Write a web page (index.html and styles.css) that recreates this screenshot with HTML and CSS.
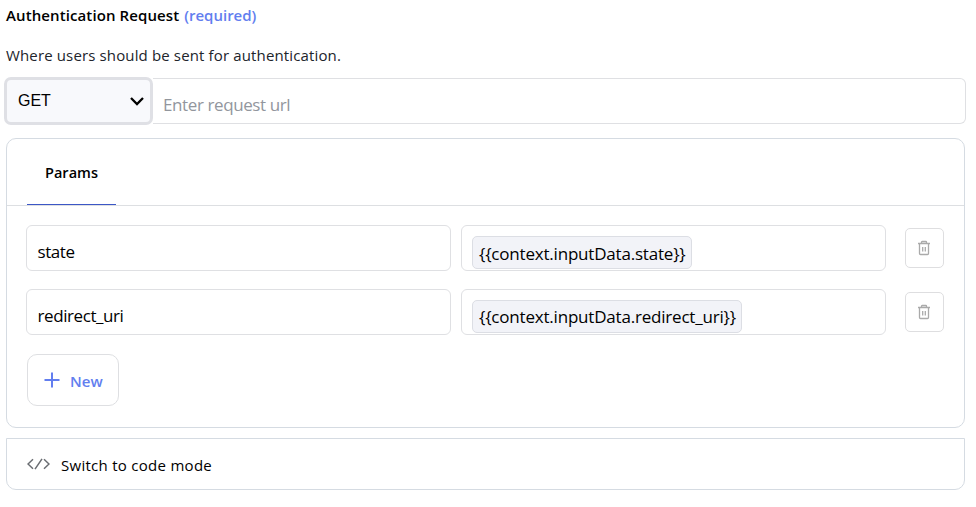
FILE: index.html
```html
<!DOCTYPE html>
<html lang="en">
<head>
<meta charset="utf-8">
<title>Authentication Request</title>
<link rel="stylesheet" href="styles.css">
</head>
<body>
<main class="form">
  <h2 class="title"><span class="title-text">Authentication Request</span> <span class="required">(required)</span></h2>
  <p class="help"><span>Where users should be sent for authentication.</span></p>
  <div class="request">
    <div class="method"><span>GET</span>
      <svg class="chevron" viewBox="0 0 16 10"><path d="M2 2l6 6 6-6"/></svg>
    </div>
    <div class="url"><span>Enter request url</span></div>
  </div>
  <section class="card">
    <nav class="tabs"><div class="tab"><span>Params</span></div></nav>
    <div class="params">
      <div class="row">
        <div class="field"><span>state</span></div>
        <div class="field value"><div class="token token-state"><span>{{context.inputData.state}}</span></div></div>
        <button class="delete" aria-label="Delete"><svg viewBox="0 0 14 16"><path d="M1 3.5h12M4.5 3.5V2.2q0-.7.7-.7h3.6q.7 0 .7.7v1.3M2.5 3.5v10q0 1 1 1h7q1 0 1-1v-10"/><path d="M5.7 7v4.5M8.3 7v4.5"/></svg></button>
      </div>
      <div class="row">
        <div class="field"><span>redirect_uri</span></div>
        <div class="field value"><div class="token token-uri"><span>{{context.inputData.redirect_uri}}</span></div></div>
        <button class="delete" aria-label="Delete"><svg viewBox="0 0 14 16"><path d="M1 3.5h12M4.5 3.5V2.2q0-.7.7-.7h3.6q.7 0 .7.7v1.3M2.5 3.5v10q0 1 1 1h7q1 0 1-1v-10"/><path d="M5.7 7v4.5M8.3 7v4.5"/></svg></button>
      </div>
      <button class="new"><svg viewBox="0 0 16 16"><path d="M8 .5v15M.5 8h15"/></svg><span>New</span></button>
    </div>
  </section>
  <div class="switch">
    <svg viewBox="0 0 23 12"><path d="M6 1.2L1 6l5 4.8M17 1.2L22 6l-5 4.8M15 .8L8 11.2"/></svg>
    <span>Switch to code mode</span>
  </div>
</main>
</body>
</html>
```
FILE: styles.css
```css
* { box-sizing: border-box; }
body {
  margin: 0;
  background: #fff;
  color: #000;
  font-family: "Open Sans", "Noto Sans", sans-serif;
  font-size: 15px;
}
span { white-space: nowrap; }
svg { fill: none; flex: none; }
button { padding: 0; background: #fff; font: inherit; }
.form { padding: 4px 10px 0 6px; }
.title { margin: 0; font-size: 15px; line-height: 22px; font-weight: 600; display: flex; gap: 5px; letter-spacing: 0.1px; }
.required { color: #627eef; letter-spacing: 0; }
.help { margin: 18px 0 0; line-height: 22px; color: #21242b; letter-spacing: 0.14px; }
.request { display: flex; height: 48px; margin: 11px 0 0 -2px; align-items: center; }
.method {
  width: 149px;
  height: 48px;
  padding: 0 7px 0 11px;
  border: 3px solid #dfe0e5;
  border-radius: 7px;
  background: #f8f9fc;
  display: flex;
  align-items: center;
  justify-content: space-between;
  font: 16px/22px "Liberation Sans", Arial, sans-serif;
}
.method svg { width: 16px; height: 10px; stroke: #000; stroke-width: 2.3; margin-right: -2px; }
.url {
  flex: 1;
  height: 46px;
  padding: 6px 9px 0 10px;
  border: 1px solid #dfe0e3;
  border-left: 0;
  border-radius: 0 6px 6px 0;
  display: flex;
  align-items: center;
  color: #92969d;
  font-size: 17px;
  letter-spacing: -0.4px;
}
.card { width: 959px; height: 290px; margin-top: 13px; border: 1px solid #d5dbe2; border-radius: 10px; }
.tabs { height: 67px; padding-left: 20px; border-bottom: 1px solid #dddfe2; display: flex; }
.tab { width: 89px; height: 66px; border-bottom: 1px solid #3c57c6; display: flex; align-items: center; justify-content: center; padding-top: 1px; font-weight: 600; font-size: 14.5px; }
.params { padding: 19px 20px 0 19px; }
.row { display: flex; height: 46px; margin-bottom: 18px; align-items: center; }
.field {
  width: 425px;
  height: 46px;
  margin-right: 10px;
  padding: 7px 11px 0 10.5px;
  border: 1px solid #dfe0e3;
  border-radius: 6px;
  display: flex;
  align-items: center;
  font-size: 17px;
  letter-spacing: -0.42px;
}
.value { margin-right: 19px; padding: 10px 10px 0; align-items: flex-start; letter-spacing: -0.2px; }
.token { height: 33px; border: 1px solid #dcdee4; border-radius: 5px; background: #f2f3f8; padding: 2px 6px 0; display: flex; align-items: center; }
.token-state { width: 220px; }
.token-uri { width: 270px; padding-top: 0; }
.delete { width: 39px; height: 40px; border: 1px solid #dedee0; border-radius: 5px; display: flex; align-items: center; justify-content: center; padding-right: 1px; }
.delete svg { width: 14px; height: 16px; stroke: #aaa; stroke-width: 1.3; }
.new { width: 92px; height: 52px; margin: 1px 0 0 1px; padding: 0 0 0 16px; border: 1px solid #dedfe2; border-radius: 10px; display: flex; align-items: center; gap: 10px; color: #627eef; font-weight: 600; position: relative; top: 1px; }
.new svg { width: 16px; height: 16px; stroke: #627eef; stroke-width: 2; }
.new span { padding-top: 1px; }
.switch { width: 959px; height: 52px; margin-top: 10px; padding-left: 20px; border: 1px solid #d5dbe2; border-radius: 0 0 10px 10px; display: flex; align-items: center; gap: 11px; letter-spacing: 0.28px; }
.switch svg { width: 23px; height: 12px; stroke: #6a6d72; stroke-width: 1.5; }
.switch span { padding-top: 1px; }
```
